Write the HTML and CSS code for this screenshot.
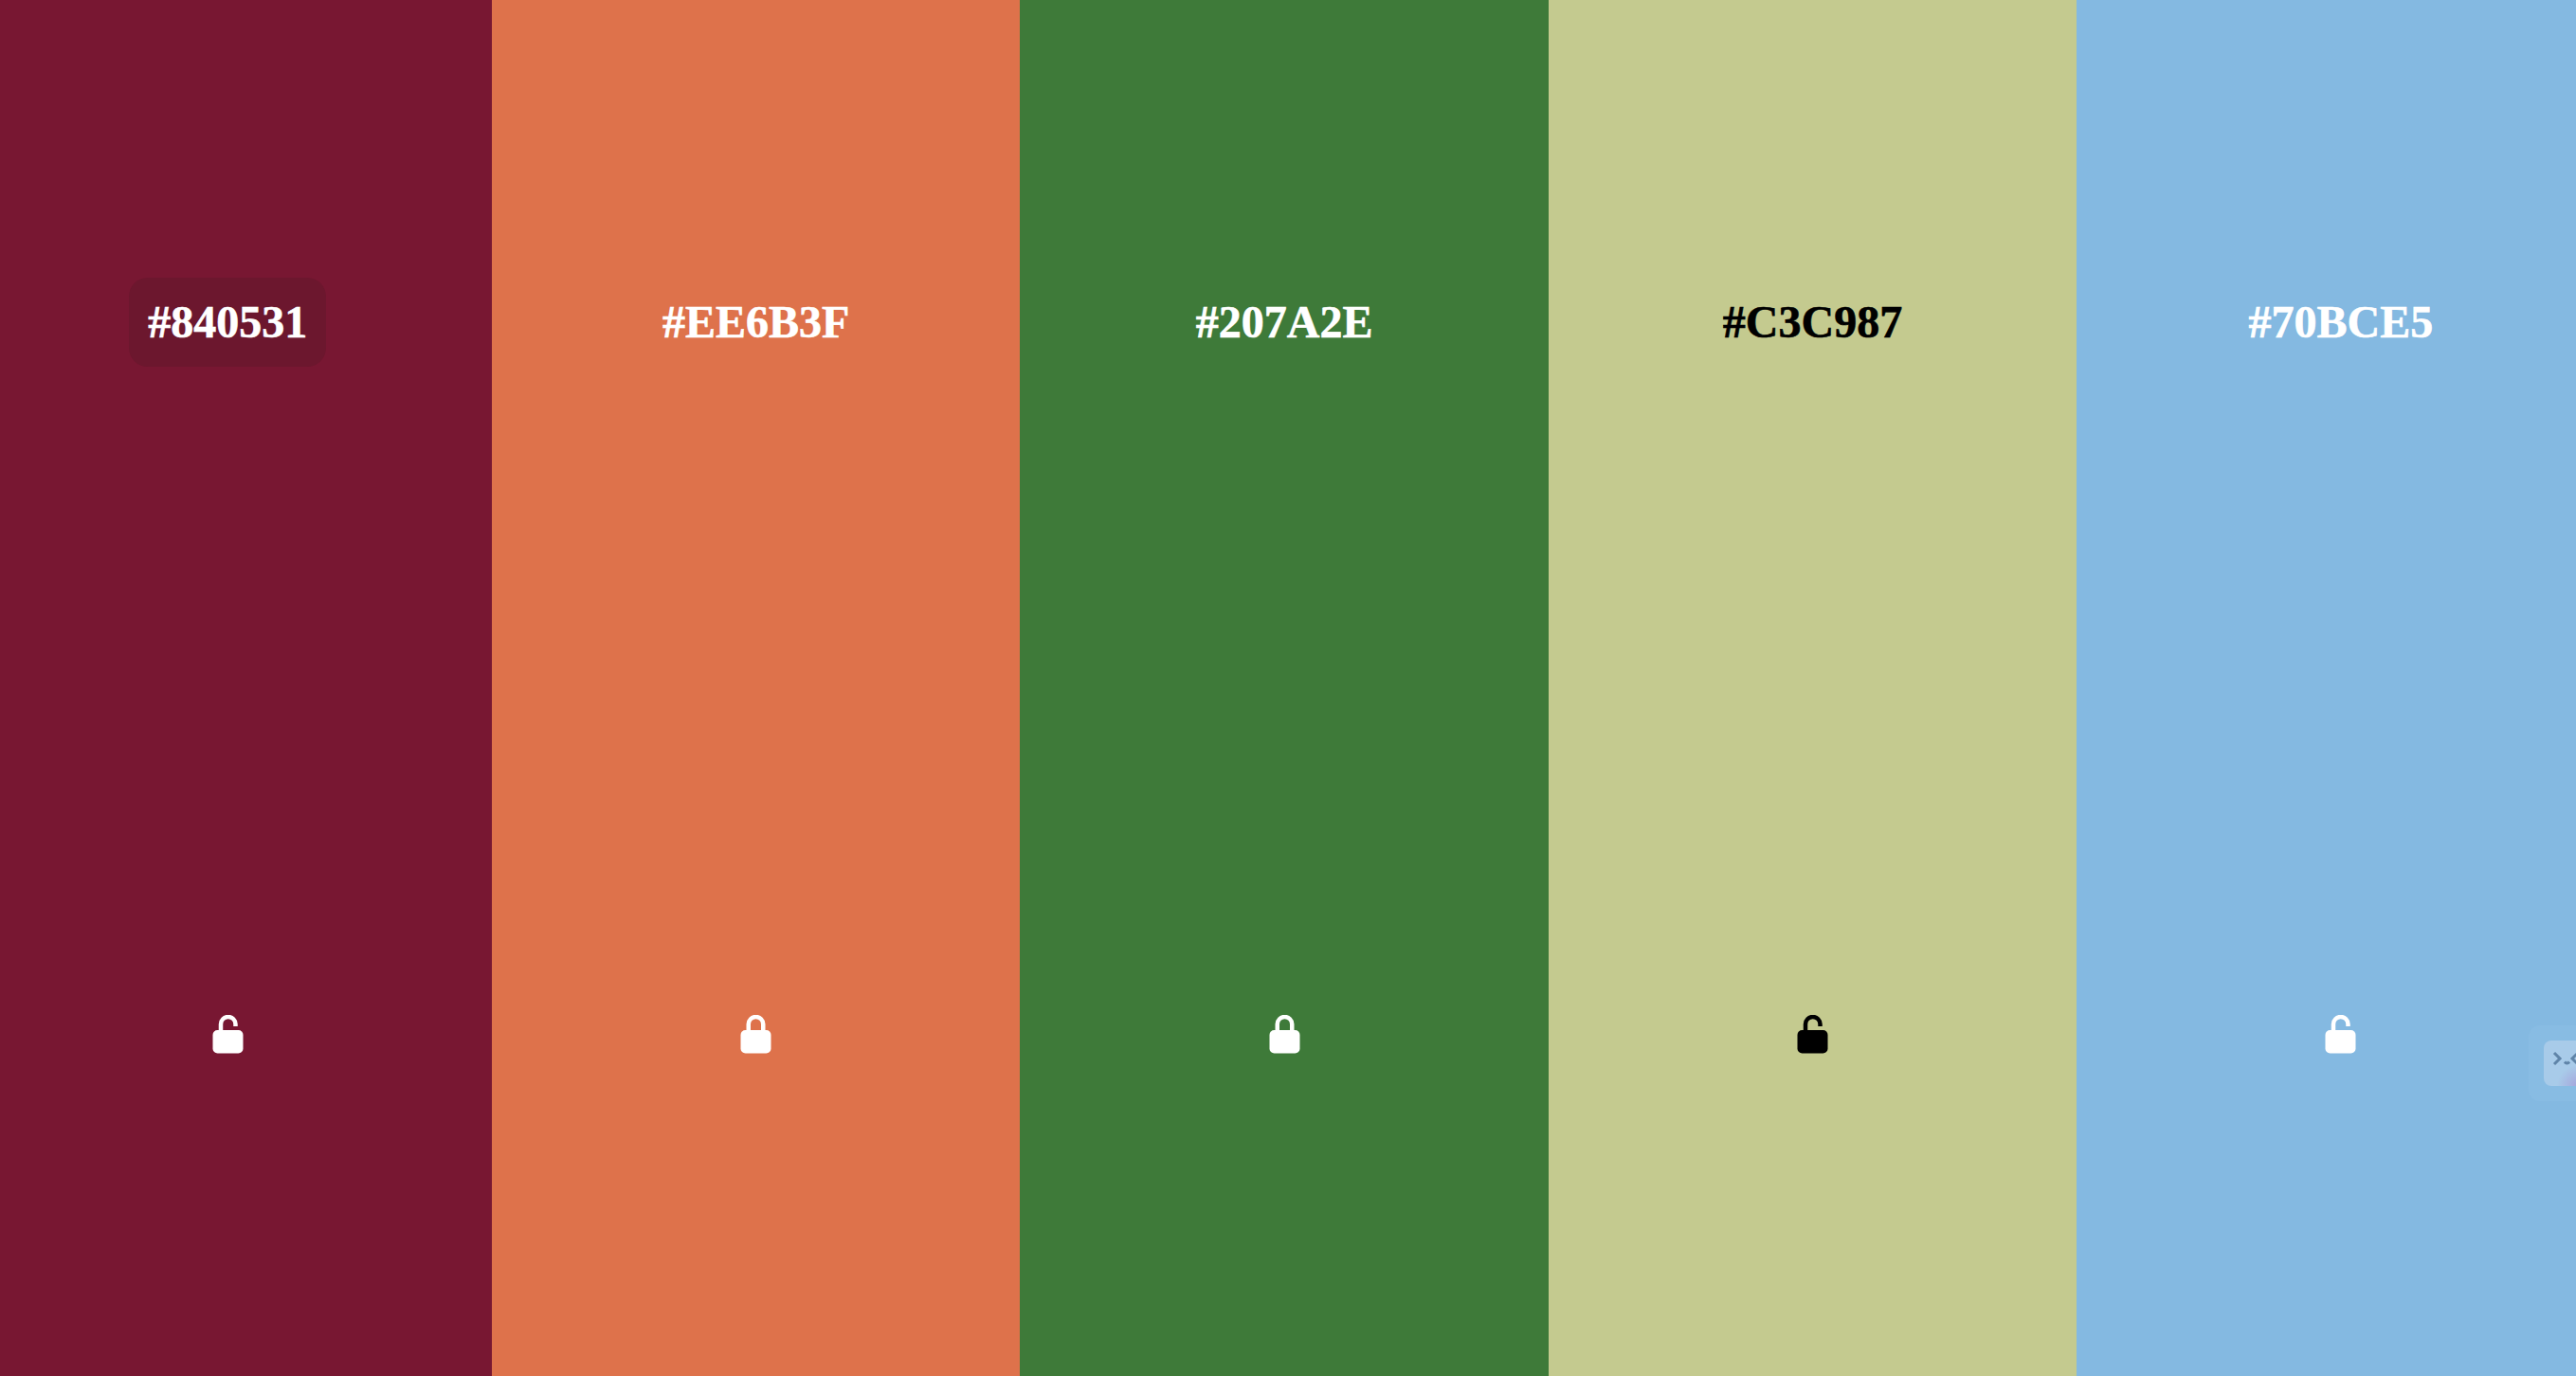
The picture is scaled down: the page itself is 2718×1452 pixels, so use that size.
FILE: index.html
```html
<!DOCTYPE html>
<html>

	<head>
		<meta charset="utf-8">
		<title>Palette</title>
		<link rel="stylesheet" href="styles.css">
	</head>

	<body>
		<svg class="defs">
			<symbol id="lock-open" viewBox="0 0 33 41">
				<path class="shackle" d="M9 17V9.75a7.75 7.75 0 0 1 15.5 0V12"/>
				<rect class="lock-body" x="0.5" y="16" width="32" height="24.5" rx="5"/>
			</symbol>
			<symbol id="lock-closed" viewBox="0 0 33 41">
				<path class="shackle" d="M8.75 17V9.75a7.75 7.75 0 0 1 15.5 0V17"/>
				<rect class="lock-body" x="0.5" y="16" width="32" height="24.5" rx="5"/>
			</symbol>
		</svg>

		<main class="palette">
			<section class="swatch swatch-1">
				<h2 class="hex hex-hover">#840531</h2>
				<button class="lock"><svg><use href="#lock-open"/></svg></button>
			</section>
			<section class="swatch swatch-2">
				<h2 class="hex">#EE6B3F</h2>
				<button class="lock"><svg><use href="#lock-closed"/></svg></button>
			</section>
			<section class="swatch swatch-3">
				<h2 class="hex">#207A2E</h2>
				<button class="lock"><svg><use href="#lock-closed"/></svg></button>
			</section>
			<section class="swatch swatch-4">
				<h2 class="hex">#C3C987</h2>
				<button class="lock"><svg><use href="#lock-open"/></svg></button>
			</section>
			<section class="swatch swatch-5">
				<h2 class="hex">#70BCE5</h2>
				<button class="lock"><svg><use href="#lock-open"/></svg></button>
			</section>
		</main>

		<aside class="helper">
			<div class="helper-face">
				<svg width="34" height="48" viewBox="0 0 34 48">
					<path class="face-line" d="M11 13l6 6-6 6"/>
					<path class="face-line" d="M22 22.500q2.500 3 5 0"/>
					<path class="face-line" d="M36 13l-6 6 6 6"/>
				</svg>
			</div>
		</aside>
	</body>

</html>
```

FILE: styles.css
```css
* {
	box-sizing: border-box;
}
html, body {
	margin: 0;
	padding: 0;
	height: 100%;
	overflow: hidden;
}
.defs {
	display: none;
}
.palette {
	display: flex;
	width: 2787px;
	height: 1452px;
	margin-left: -38.4px; /* page is scrolled sideways in the shot */
}
.swatch {
	flex: 0 0 557.4px;
	display: flex;
	flex-direction: column;
	align-items: center;
	gap: 684px;
	padding-top: 293px;
	color: #fff;
}
.swatch-1 { background: #781732; }
.swatch-2 { background: #de724b; }
.swatch-3 { background: #3e7a39; }
.swatch-4 { background: #c4ca8f; color: #000; }
.swatch-5 { background: #84b9e1; }

.hex {
	margin: 0;
	padding: 20px;
	height: 94px;
	border-radius: 20px;
	font-family: "Liberation Serif", serif;
	font-size: 48px;
	font-weight: bold;
	line-height: 54px;
	-webkit-text-stroke: 0.6px currentColor;
}
.hex-hover {
	background: #6c172e;
}
.lock {
	display: block;
	width: 33px;
	height: 41px;
	margin: 0;
	padding: 0;
	border: 0;
	background: none;
	color: inherit;
}
.lock svg {
	display: block;
	width: 33px;
	height: 41px;
}
.shackle {
	fill: none;
	stroke: currentColor;
	stroke-width: 4.5;
}
.lock-body {
	fill: currentColor;
}

.helper {
	position: absolute;
	top: 1082px;
	left: 2668px;
	width: 80px;
	height: 80px;
	padding: 16px;
	border-radius: 12px;
	background: #88bce3;
}
.helper-face {
	width: 48px;
	height: 48px;
	border-radius: 8px;
	overflow: hidden;
	background:
		radial-gradient(circle 22px at 36px 48px, #a5a6dc 0, rgba(165, 166, 220, 0) 100%),
		#a8cbe9;
}
.helper-face svg {
	display: block;
}
.face-line {
	fill: none;
	stroke: #5f84a8;
	stroke-width: 3;
}
```
